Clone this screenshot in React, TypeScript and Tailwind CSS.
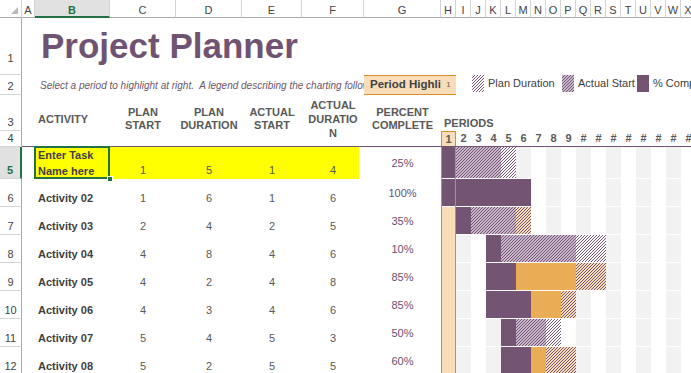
import React from 'react';

const solid: Record<string, string> = {
  P: 'bg-[#735573]',
  O: 'bg-[#e9ad55]',
};
const hatchBg: Record<string, string> = {
  L: '#c9b8cb',
  W: '#ffffff',
  Q: '#f8dcb8',
};

function Hatch({ bg }: { bg: string }) {
  const raw = React.useId();
  const id = 'h' + raw.replace(/[^a-zA-Z0-9]/g, '');
  return (
    <svg className="block w-full h-full" shapeRendering="crispEdges">
      <defs>
        <pattern id={id} width="3" height="3" patternUnits="userSpaceOnUse">
          <rect width="3" height="3" fill={bg} />
          <rect x="2" y="0" width="1" height="1" fill="#735573" />
          <rect x="1" y="1" width="1" height="1" fill="#735573" />
          <rect x="0" y="2" width="1" height="1" fill="#735573" />
        </pattern>
      </defs>
      <rect width="100%" height="100%" fill={`url(#${id})`} />
    </svg>
  );
}

function Bar({ t, h }: { t: string; h: string }) {
  if (solid[t]) return <div className={`${h} ${solid[t]}`} />;
  return (
    <div className={h}>
      <Hatch bg={hatchBg[t]} />
    </div>
  );
}

const cols = [
  { l: 'A', w: 'w-[13px]' },
  { l: 'B', w: 'w-[75px]' },
  { l: 'C', w: 'w-[66px]' },
  { l: 'D', w: 'w-[66px]' },
  { l: 'E', w: 'w-[60px]' },
  { l: 'F', w: 'w-[62px]' },
  { l: 'G', w: 'w-[77px]' },
];
const gLetters = 'HIJKLMNOPQRSTUVWX'.split('');

type RowData = {
  n: string;
  name: string[];
  v: number[];
  pct: string;
  bars: string;
};

const data: RowData[] = [
  { n: '5', name: ['Enter Task', 'Name here'], v: [1, 5, 1, 4], pct: '25%', bars: 'PLLLW' },
  { n: '6', name: ['Activity 02'], v: [1, 6, 1, 6], pct: '100%', bars: 'PPPPPP' },
  { n: '7', name: ['Activity 03'], v: [2, 4, 2, 5], pct: '35%', bars: '.PLLLQ' },
  { n: '8', name: ['Activity 04'], v: [4, 8, 4, 6], pct: '10%', bars: '...PLLLLLWW' },
  { n: '9', name: ['Activity 05'], v: [4, 2, 4, 8], pct: '85%', bars: '...PPOOOOQQ' },
  { n: '10', name: ['Activity 06'], v: [4, 3, 4, 6], pct: '85%', bars: '...PPPOOQ' },
  { n: '11', name: ['Activity 07'], v: [5, 4, 5, 3], pct: '50%', bars: '....PLLW' },
  { n: '12', name: ['Activity 08'], v: [5, 2, 5, 5], pct: '60%', bars: '....PPOQQ' },
];

function RowNum({ n, h, pb = 'pb-[1px]', selected = false }: { n: string; h: string; pb?: string; selected?: boolean }) {
  return (
    <div
      className={`w-[22px] shrink-0 ${h} ${pb} border-b border-b-[#d4d4d4] flex items-end justify-center text-[11px] leading-[13px] ${
        selected
          ? 'bg-[#e1e1e1] border-r-2 border-r-[#217346] text-[#217346] font-bold'
          : 'border-r border-r-[#ababab] text-[#444444]'
      }`}
    >
      {n}
    </div>
  );
}

function ColHeader() {
  return (
    <div className="flex w-max h-[18px]">
      <div className="relative w-[22px] h-[18px] shrink-0 border-r border-b border-r-[#d4d4d4] border-b-[#ababab]">
        <svg className="absolute right-[3px] bottom-[3px]" width="7" height="7" viewBox="0 0 7 7">
          <polygon points="7,0 7,7 0,7" fill="#b9b9b9" />
        </svg>
      </div>
      {cols.map((c) => (
        <div
          key={c.l}
          className={`${c.w} shrink-0 h-[18px] pt-[4px] text-center text-[11px] leading-[13px] ${
            c.l === 'B'
              ? 'bg-[#e1e1e1] border-r border-r-[#d4d4d4] border-b-2 border-b-[#217346] text-[#217346] font-bold'
              : 'border-r border-b border-r-[#d4d4d4] border-b-[#ababab] text-[#444444]'
          }`}
        >
          {c.l}
        </div>
      ))}
      {gLetters.map((l) => (
        <div
          key={l}
          className="w-[15px] shrink-0 h-[18px] pt-[4px] text-center text-[11px] leading-[13px] border-r border-b border-r-[#d4d4d4] border-b-[#ababab] text-[#444444]"
        >
          {l}
        </div>
      ))}
    </div>
  );
}

function Row1() {
  return (
    <div className="flex w-max h-[57px]">
      <RowNum n="1" h="h-[57px]" pb="pb-[9px]" />
      <div className="w-[13px] shrink-0" />
      <div className="w-[656px] shrink-0 pl-[6px] pt-[10px] text-[35px] leading-[35px] font-bold text-[#705372] whitespace-nowrap">
        Project Planner
      </div>
    </div>
  );
}

function Row2() {
  return (
    <div className="flex w-max h-[20px]">
      <RowNum n="2" h="h-[20px]" />
      <div className="w-[13px] shrink-0" />
      <div className="w-[329px] shrink-0 h-[20px] pl-[5px] flex items-center overflow-hidden whitespace-pre italic text-[10px] text-[#6a566c]">
        {'Select a period to highlight at right.  A legend describing the charting follows.'}
      </div>
      <div className="w-[77px] shrink-0 h-[20px] bg-[#f8ddbb] border-y border-[#d98c26] pl-[6px] flex items-center overflow-hidden whitespace-nowrap font-bold text-[11.5px] text-[#404040]">
        Period Highlight
      </div>
      <div className="w-[15px] shrink-0 h-[20px] bg-[#f8ddbb] border-y border-[#d98c26] flex items-center justify-center text-[8px] text-[#6b5a4d]">
        1
      </div>
      <div className="flex h-[20px] shrink-0 text-[11px] leading-[17px] text-[#404040] whitespace-nowrap">
        <div className="w-[106px] pl-[16px] flex items-start">
          <div className="w-[12px] h-[17px] shrink-0">
            <Hatch bg="#ffffff" />
          </div>
          <span className="ml-[4px]">Plan Duration</span>
        </div>
        <div className="w-[75px] flex items-start">
          <div className="w-[12px] h-[17px] shrink-0">
            <Hatch bg="#c9b8cb" />
          </div>
          <span className="ml-[4px]">Actual Start</span>
        </div>
        <div className="flex items-start">
          <div className="w-[12px] h-[17px] shrink-0 bg-[#735573]" />
          <span className="ml-[4px]">% Complete</span>
        </div>
      </div>
    </div>
  );
}

function Row34() {
  const hdr =
    'shrink-0 h-[52px] pb-[3px] border-b border-b-[#735573] flex items-center font-bold text-[11px] leading-[13px] text-[#595959]';
  return (
    <div className="flex w-max">
      <div className="flex flex-col">
        <RowNum n="3" h="h-[36px]" />
        <RowNum n="4" h="h-[16px]" />
      </div>
      <div className={`w-[13px] ${hdr}`} />
      <div className={`w-[75px] pl-[3px] ${hdr}`}>ACTIVITY</div>
      <div className={`w-[66px] justify-center text-center ${hdr}`}>
        PLAN
        <br />
        START
      </div>
      <div className={`w-[66px] justify-center text-center ${hdr}`}>
        PLAN
        <br />
        DURATION
      </div>
      <div className={`w-[60px] justify-center text-center ${hdr}`}>
        ACTUAL
        <br />
        START
      </div>
      <div className={`w-[62px] justify-center text-center ${hdr} leading-[14px]`}>
        ACTUAL
        <br />
        DURATIO
        <br />N
      </div>
      <div className={`w-[77px] justify-center text-center ${hdr}`}>
        PERCENT
        <br />
        COMPLETE
      </div>
      <div className="flex flex-col">
        <div className="h-[36px] w-[255px] pl-[3px] pb-[1px] flex items-end font-bold text-[11px] leading-[13px] text-[#595959]">
          PERIODS
        </div>
        <div className="h-[16px] flex border-b border-b-[#735573]">
          {gLetters.map((_, i) => (
            <div
              key={i}
              className={`w-[15px] h-[15px] shrink-0 flex items-center justify-center font-bold text-[11px] leading-[13px] text-[#595959] ${
                i === 0 ? 'bg-[#f8ddbb] border-x border-t border-[#d98c26]' : ''
              }`}
            >
              {i < 9 ? i + 1 : '#'}
            </div>
          ))}
        </div>
      </div>
    </div>
  );
}

function GanttCell({ i, t, first }: { i: number; t: string | null; first: boolean }) {
  const outer = first ? 'h-[32px]' : 'h-[28px]';
  const inner = first ? 'h-[31px]' : 'h-[27px]';
  if (i === 0) {
    return (
      <div className={`w-[15px] shrink-0 ${outer} border-x border-[#d98c26] bg-[#f8ddbb] flex flex-col`}>
        {t && (
          <>
            <Bar t={t} h={inner} />
            <div className="h-px bg-white" />
          </>
        )}
      </div>
    );
  }
  return (
    <div className={`w-[15px] shrink-0 ${outer}`}>
      {t ? <Bar t={t} h={inner} /> : <div className={`${inner} ${i % 2 === 1 ? 'bg-[#f2f2f2]' : 'bg-white'}`} />}
    </div>
  );
}

function DataRow({ r, first }: { r: RowData; first: boolean }) {
  const H = first ? 'h-[32px]' : 'h-[28px]';
  const num = `shrink-0 ${H} pb-[2px] flex items-end justify-center text-[11px] leading-[13px] text-[#595959]`;
  const yellow = first ? 'bg-[#ffff00]' : '';
  return (
    <div className="flex w-max">
      <RowNum n={r.n} h={H} selected={first} />
      <div className={`w-[13px] shrink-0 ${H}`} />
      <div
        className={`relative w-[75px] shrink-0 ${H} pl-[3px] flex flex-col justify-end font-bold text-[11px] text-[#404040] ${yellow} ${
          first ? 'leading-[16px]' : 'leading-[13px] pb-[2px]'
        }`}
      >
        {r.name.map((s) => (
          <div key={s} className="whitespace-nowrap">
            {s}
          </div>
        ))}
        {first && (
          <>
            <div className="absolute left-[-1px] top-[-1px] w-[76px] h-[33px] border-2 border-[#217346]" />
            <div className="absolute left-[72px] top-[29px] w-[6px] h-[6px] bg-[#217346] border border-white" />
          </>
        )}
      </div>
      <div className={`w-[66px] ${num} ${yellow}`}>{r.v[0]}</div>
      <div className={`w-[66px] ${num} ${yellow}`}>{r.v[1]}</div>
      <div className={`w-[60px] ${num} ${yellow}`}>{r.v[2]}</div>
      <div
        className={`w-[62px] ${num} ${
          first ? 'bg-[image:linear-gradient(to_right,#ffff00_57px,#ffffff_57px)]' : ''
        }`}
      >
        {r.v[3]}
      </div>
      <div className={`w-[77px] shrink-0 ${H} flex items-center justify-center text-[11px] text-[#6b4f6d]`}>
        {r.pct}
      </div>
      {gLetters.map((_, i) => {
        const c = r.bars[i];
        return <GanttCell key={i} i={i} t={c && c !== '.' ? c : null} first={first} />;
      })}
    </div>
  );
}

export default function App() {
  return (
    <div className="w-[691px] h-[373px] overflow-hidden bg-white font-['Liberation_Sans',Arial,sans-serif] text-[#404040]">
      <ColHeader />
      <Row1 />
      <Row2 />
      <Row34 />
      {data.map((r, i) => (
        <DataRow key={r.n} r={r} first={i === 0} />
      ))}
    </div>
  );
}
